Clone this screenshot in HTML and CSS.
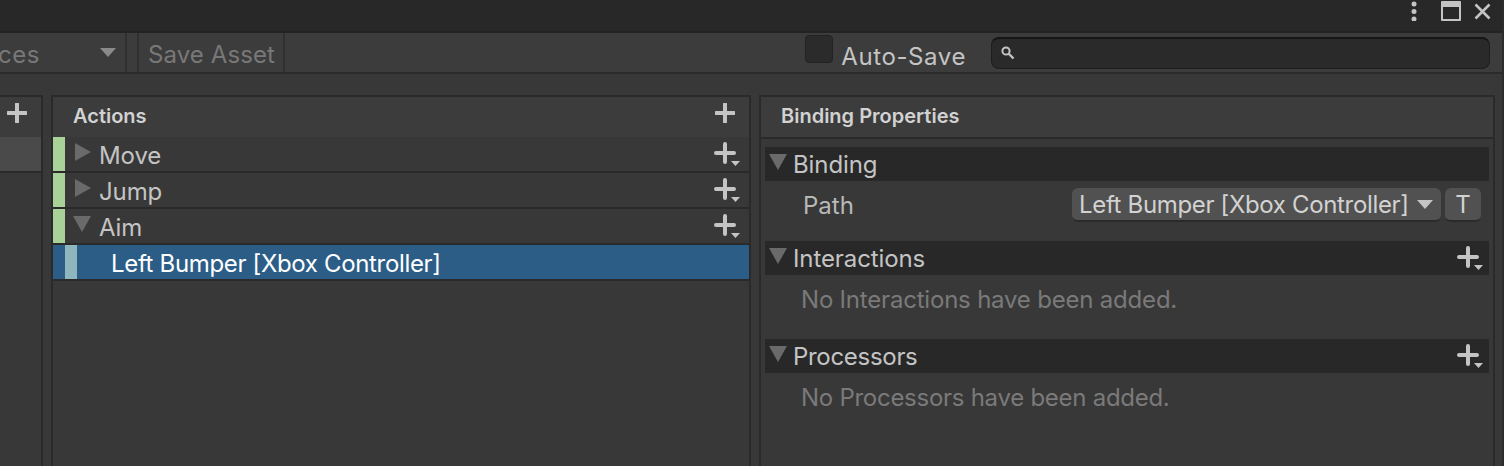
FILE: index.html
```html
<!DOCTYPE html>
<html lang="en">
<head>
    <meta charset="UTF-8">
    <meta name="viewport" content="width=device-width, initial-scale=1.0">
    <title>Input Actions</title>
    <link rel="stylesheet" href="styles.css">
</head>
<body>

    <svg class="defs" width="0" height="0">
        <symbol id="plus" viewBox="0 0 20 20">
            <path d="M10 1v18M1 10h18" stroke="#c4c4c4" stroke-width="4" stroke-linecap="round" fill="none"/>
        </symbol>
        <symbol id="plus-more" viewBox="0 0 28 26">
            <path d="M11 2v18M2 11h18" stroke="#c4c4c4" stroke-width="4" stroke-linecap="round" fill="none"/>
            <path d="M17 19h9l-4.500 5z" fill="#c4c4c4"/>
        </symbol>
    </svg>

    <div class="window">
        <div class="titlebar">
            <svg class="title-icon" width="8" height="20" viewBox="0 0 8 20">
                <circle cx="4" cy="3" r="2.500"/><circle cx="4" cy="10.500" r="2.500"/><circle cx="4" cy="18" r="2.500"/>
            </svg>
            <svg class="title-icon" width="20" height="20" viewBox="0 0 20 20">
                <path d="M1 0h18a1 1 0 0 1 1 1v18a1 1 0 0 1-1 1H1a1 1 0 0 1-1-1V1a1 1 0 0 1 1-1zM2 6v12h16V6z" fill-rule="evenodd"/>
            </svg>
            <svg class="title-icon close" width="17" height="17" viewBox="0 0 17 17">
                <path d="M1.500 1.500l14 14M15.500 1.500l-14 14" stroke="#c4c4c4" stroke-width="2.600" fill="none"/>
            </svg>
        </div>

        <div class="toolbar">
            <div class="tool-dropdown">
                <span class="devices">All Devices</span>
                <span class="arrow-down"></span>
            </div>
            <div class="tool-gap"></div>
            <div class="tool-button"><span class="tool-label">Save Asset</span></div>
            <div class="tool-right">
                <span class="checkbox"></span>
                <span class="autosave">Auto-Save</span>
                <div class="search">
                    <svg width="16" height="16" viewBox="0 0 16 16">
                        <circle cx="6" cy="6" r="3.600" stroke="#c4c4c4" stroke-width="2" fill="none"/>
                        <path d="M8.500 8.500l5 5" stroke="#c4c4c4" stroke-width="2.400"/>
                    </svg>
                </div>
            </div>
        </div>

        <div class="main">
            <div class="panel maps">
                <div class="panel-head">
                    <svg class="head-plus" width="20" height="20"><use href="#plus"/></svg>
                </div>
                <div class="map-row"></div>
            </div>

            <div class="panel actions">
                <div class="panel-head">
                    <span class="head-title">Actions</span>
                    <svg class="head-plus" width="20" height="20"><use href="#plus"/></svg>
                </div>
                <div class="action-row">
                    <span class="bar-green"></span>
                    <span class="arrow-right"></span>
                    <span class="row-label">Move</span>
                    <svg class="row-plus" width="28" height="26"><use href="#plus-more"/></svg>
                </div>
                <div class="action-row">
                    <span class="bar-green"></span>
                    <span class="arrow-right"></span>
                    <span class="row-label">Jump</span>
                    <svg class="row-plus" width="28" height="26"><use href="#plus-more"/></svg>
                </div>
                <div class="action-row">
                    <span class="bar-green"></span>
                    <span class="arrow-open"></span>
                    <span class="row-label">Aim</span>
                    <svg class="row-plus" width="28" height="26"><use href="#plus-more"/></svg>
                </div>
                <div class="action-row selected">
                    <span class="bar-blue"></span>
                    <span class="row-label">Left Bumper [Xbox Controller]</span>
                </div>
            </div>

            <div class="panel props">
                <div class="panel-head props-head">
                    <span class="head-title">Binding Properties</span>
                </div>
                <div class="props-body">
                    <div class="section">
                        <span class="arrow-open"></span>
                        <span class="section-label">Binding</span>
                    </div>
                    <div class="path-row">
                        <span class="path-label">Path</span>
                        <div class="path-dropdown">
                            <span class="path-value">Left Bumper [Xbox Controller]</span>
                            <span class="arrow-down light"></span>
                        </div>
                        <div class="t-button">T</div>
                    </div>
                    <div class="section">
                        <span class="arrow-open"></span>
                        <span class="section-label">Interactions</span>
                        <svg class="row-plus" width="28" height="26"><use href="#plus-more"/></svg>
                    </div>
                    <div class="empty-note">No Interactions have been added.</div>
                    <div class="section">
                        <span class="arrow-open"></span>
                        <span class="section-label tight">Processors</span>
                        <svg class="row-plus" width="28" height="26"><use href="#plus-more"/></svg>
                    </div>
                    <div class="empty-note tight">No Processors have been added.</div>
                </div>
            </div>
        </div>
    </div>

</body>
</html>
```

FILE: styles.css
```css
body {
    margin: 0;
    padding: 0;
    background: #383838;
    font-family: 'Inter', 'Liberation Sans', sans-serif;
    color: #c4c4c4;
    overflow: hidden;
}

.defs {
    display: none;
}

.window {
    height: 466px;
    display: flex;
    flex-direction: column;
    border-right: 2px solid #2c2c2c;
    overflow: hidden;
}

.titlebar {
    height: 32px;
    box-sizing: border-box;
    flex: none;
    background: #282828;
    border-bottom: 1px solid #222;
    display: flex;
    justify-content: flex-end;
    align-items: flex-start;
    padding: 1px 11px 0 0;
}

.title-icon {
    fill: #c4c4c4;
    margin-left: 23px;
}

.title-icon.close {
    margin-left: 13px;
    margin-top: 2px;
}

.toolbar {
    height: 42px;
    box-sizing: border-box;
    flex: none;
    background: #3c3c3c;
    border-top: 1px solid #232323;
    border-bottom: 2px solid #2a2a2a;
    display: flex;
    font-size: 24px;
    color: #787878;
}

.tool-dropdown {
    width: 127px;
    box-sizing: border-box;
    flex: none;
    display: flex;
    align-items: center;
    padding-right: 9px;
    border-right: 2px solid #303030;
    overflow: hidden;
}

.devices {
    flex: none;
    margin-left: -92px;
    margin-top: 3px;
    letter-spacing: 0.6px;
}

.arrow-down {
    margin-left: auto;
    width: 0;
    height: 0;
    border-left: 8px solid transparent;
    border-right: 8px solid transparent;
    border-top: 9px solid #8a8a8a;
}

.arrow-down.light {
    border-top-color: #c4c4c4;
    margin-left: 8px;
}

.tool-gap {
    width: 10px;
    flex: none;
}

.tool-button {
    width: 148px;
    box-sizing: border-box;
    flex: none;
    display: flex;
    align-items: center;
    padding-left: 9px;
    border-left: 2px solid #303030;
    border-right: 2px solid #303030;
}

.tool-label {
    margin-top: 3px;
    letter-spacing: 0.1px;
}

.tool-right {
    margin-left: auto;
    display: flex;
    align-items: center;
    padding-right: 12px;
}

.checkbox {
    width: 28px;
    height: 28px;
    box-sizing: border-box;
    background: #2b2b2b;
    border: 1px solid #222;
    border-radius: 4px;
    align-self: flex-start;
    margin-top: 2px;
}

.autosave {
    margin-left: 8px;
    margin-right: 25px;
    color: #c4c4c4;
    letter-spacing: 0.6px;
    position: relative;
    top: 4px;
}

.search {
    width: 499px;
    height: 32px;
    box-sizing: border-box;
    background: #2a2a2a;
    border: 1px solid #1e1e1e;
    border-top: 2px solid #151515;
    border-radius: 8px;
    display: flex;
    align-items: center;
    padding-left: 8px;
}

.main {
    flex: 1;
    display: flex;
    padding-top: 21px;
    min-height: 0;
}

.panel {
    box-sizing: border-box;
    border: 2px solid #2a2a2a;
    border-bottom: 0;
    flex: none;
}

.maps {
    width: 43px;
    border-left: 0;
    margin-right: 8px;
}

.actions {
    width: 700px;
    margin-right: 8px;
}

.props {
    width: 736px;
}

.panel-head {
    height: 40px;
    background: #3c3c3c;
    display: flex;
    align-items: center;
    justify-content: flex-end;
}

.props-head {
    height: 42px;
    box-sizing: border-box;
    border-bottom: 2px solid #2a2a2a;
    justify-content: flex-start;
}

.head-title {
    margin-left: 20px;
    margin-right: auto;
    margin-top: -2px;
    font-size: 20px;
    font-weight: 600;
    color: #d2d2d2;
}

.head-plus {
    margin-right: 14px;
    margin-top: -8px;
}

.map-row {
    height: 34px;
    background: #4a4a4a;
    border-bottom: 2px solid #2a2a2a;
}

.action-row {
    height: 36px;
    box-sizing: border-box;
    border-bottom: 2px solid #2a2a2a;
    background: #383838;
    display: flex;
    align-items: center;
    font-size: 24px;
}

.bar-green {
    width: 12px;
    height: 34px;
    flex: none;
    background: #a8d29a;
}

.bar-blue {
    width: 12px;
    height: 34px;
    flex: none;
    margin-left: 12px;
    background: #8fb6bd;
}

.arrow-right {
    flex: none;
    margin-left: 10px;
    margin-right: 8px;
    margin-top: -4px;
    width: 0;
    height: 0;
    border-top: 9px solid transparent;
    border-bottom: 9px solid transparent;
    border-left: 16px solid #6a6a6a;
}

.arrow-open {
    flex: none;
    margin-left: 8px;
    margin-right: 8px;
    margin-top: -4px;
    width: 0;
    height: 0;
    border-left: 9px solid transparent;
    border-right: 9px solid transparent;
    border-top: 16px solid #6a6a6a;
}

.row-label {
    margin-top: 3px;
    letter-spacing: -0.1px;
}

.row-plus {
    margin-left: auto;
    margin-right: 4px;
    margin-top: 2px;
}

.action-row .row-plus {
    margin-right: 7px;
}

.selected {
    background: #2c5d87;
    color: #fff;
}

.selected .row-label {
    margin-left: 34px;
    letter-spacing: -0.34px;
}

.props-body {
    padding: 8px 0 0 3px;
}

.section {
    width: 724px;
    margin-left: 1px;
    height: 34px;
    background: #282828;
    display: flex;
    align-items: center;
    font-size: 24px;
    letter-spacing: -0.1px;
}

.section .arrow-open {
    margin-left: 4px;
    margin-right: 6px;
}

.section-label.tight {
    letter-spacing: -0.3px;
}

.path-row {
    height: 60px;
    display: flex;
    align-items: flex-start;
    padding-top: 7px;
    box-sizing: border-box;
    font-size: 24px;
}

.path-label {
    margin-left: 39px;
    margin-right: auto;
    margin-top: 3px;
    color: #b8b8b8;
}

.path-dropdown {
    width: 369px;
    height: 34px;
    box-sizing: border-box;
    background: #515151;
    border-bottom: 2px solid #2a2a2a;
    border-radius: 6px;
    display: flex;
    align-items: center;
    padding-left: 7px;
    color: #d2d2d2;
}

.path-value {
    white-space: nowrap;
    letter-spacing: -0.34px;
}

.t-button {
    width: 36px;
    height: 34px;
    box-sizing: border-box;
    margin-left: 4px;
    margin-right: 12px;
    background: #515151;
    border-bottom: 2px solid #2a2a2a;
    border-radius: 6px;
    text-align: center;
    line-height: 33px;
    color: #d2d2d2;
}

.empty-note {
    height: 64px;
    box-sizing: border-box;
    padding: 10px 0 0 37px;
    font-size: 24px;
    letter-spacing: -0.2px;
    color: #7a7a7a;
}

.empty-note.tight {
    letter-spacing: -0.27px;
}
```
